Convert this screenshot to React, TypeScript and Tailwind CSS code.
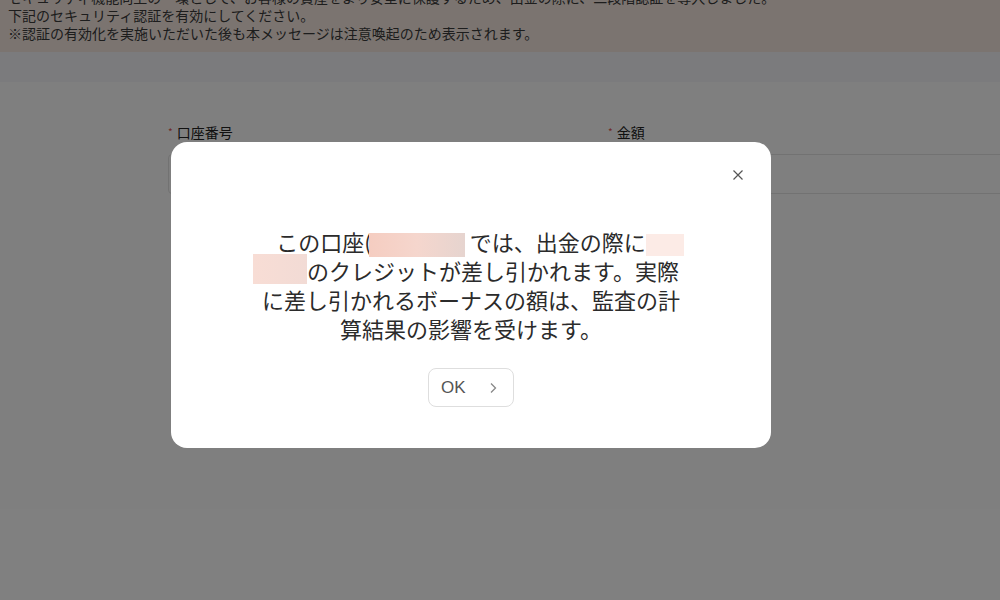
import React from 'react';

const jp = '"Noto Sans CJK JP", "Noto Sans", sans-serif';

// 伏せ字（行の高さに影響しないように中身だけ絶対配置）
const Redacted: React.FC<{ width: string; className?: string }> = ({ width, className = '' }) => (
    <span className={`relative inline-block h-0 align-middle ${width}`}>
        <span className={`absolute left-0 right-0 ${className}`}></span>
    </span>
);

const App: React.FC = () => {
    return (
        <div className="relative w-[1000px] h-[600px] overflow-hidden bg-white" style={{ fontFamily: jp }}>
            {/* 上部のお知らせ */}
            <div className="-mt-[12px] bg-[#f6e9e1] px-2 pb-[10px] text-[14px] leading-[18px] text-[#3a3a3a]">
                <p>セキュリティ機能向上の一環として、お客様の資産をより安全に保護するため、出金の際に、二段階認証を導入しました。</p>
                <p>下記のセキュリティ認証を有効にしてください。</p>
                <p>※認証の有効化を実施いただいた後も本メッセージは注意喚起のため表示されます。</p>
            </div>
            <div className="h-[30px] bg-[#f6f7fb]"></div>

            {/* フォーム */}
            <div className="flex pl-[168px] pt-[40px]">
                <div className="w-[400px] mr-[40px]">
                    <label className="flex items-center text-sm leading-5 text-[#222]">
                        <span className="mr-1 text-[10px] text-[#e0544f]">*</span>口座番号
                    </label>
                    <div className="mt-3 h-[40px] border border-[#e4e4e4] rounded"></div>
                </div>
                <div className="flex-1">
                    <label className="flex items-center text-sm leading-5 text-[#222]">
                        <span className="mr-1 text-[10px] text-[#e0544f]">*</span>金額
                    </label>
                    <div className="mt-3 h-[40px] border-y border-l border-[#e4e4e4]"></div>
                </div>
            </div>

            {/* モーダル */}
            <div className="absolute inset-0 bg-black/50 flex items-start pt-[142px] pl-[171px]">
                <div className="relative w-[600px] h-[306px] bg-white rounded-[16px] flex flex-col items-center pt-[85px]">
                    <button className="absolute left-[561px] top-[27px] w-3 h-3 flex items-center justify-center text-[#555]">
                        <svg width="12" height="12" viewBox="0 0 12 12" fill="none" stroke="currentColor" strokeWidth="1.2">
                            <path d="M1.5 1.5 10.5 10.5M10.5 1.5 1.5 10.5" />
                        </svg>
                    </button>
                    <div className="text-[22px] leading-[29px] text-[#2b2b2b] text-center whitespace-nowrap">
                        <div className="pl-[18px]">
                            この口座(<Redacted width="-ml-[3px] w-[96px]" className="-top-[12px] h-[24px] bg-gradient-to-r from-[#f5cdc1] via-[#f5d6cd] to-[#e6d4cf]" /> では、出金の際に<Redacted width="w-[38px]" className="-top-[11px] h-[22px] bg-[#fcebe6]" />
                        </div>
                        <div className="pr-[10px]">
                            <Redacted width="w-[54px]" className="-top-[20px] h-[30px] bg-gradient-to-r from-[#f8ddd5] to-[#f2dbd5]" />のクレジットが差し引かれます。実際
                        </div>
                        <div>に差し引かれるボーナスの額は、監査の計</div>
                        <div>算結果の影響を受けます。</div>
                    </div>
                    <button className="mt-[25px] w-[86px] h-[39px] border border-[#dedede] rounded-lg flex items-center pl-[12px] text-[17px] text-[#555]">
                        <span style={{ fontFamily: '"Liberation Sans", Arial, sans-serif' }}>OK</span>
                        <svg className="ml-[22px]" width="10" height="12" viewBox="0 0 10 12" fill="none" stroke="#888" strokeWidth="1.3">
                            <path d="M3 1.5 7.5 6 3 10.5" />
                        </svg>
                    </button>
                </div>
            </div>
        </div>
    );
};

export default App;
